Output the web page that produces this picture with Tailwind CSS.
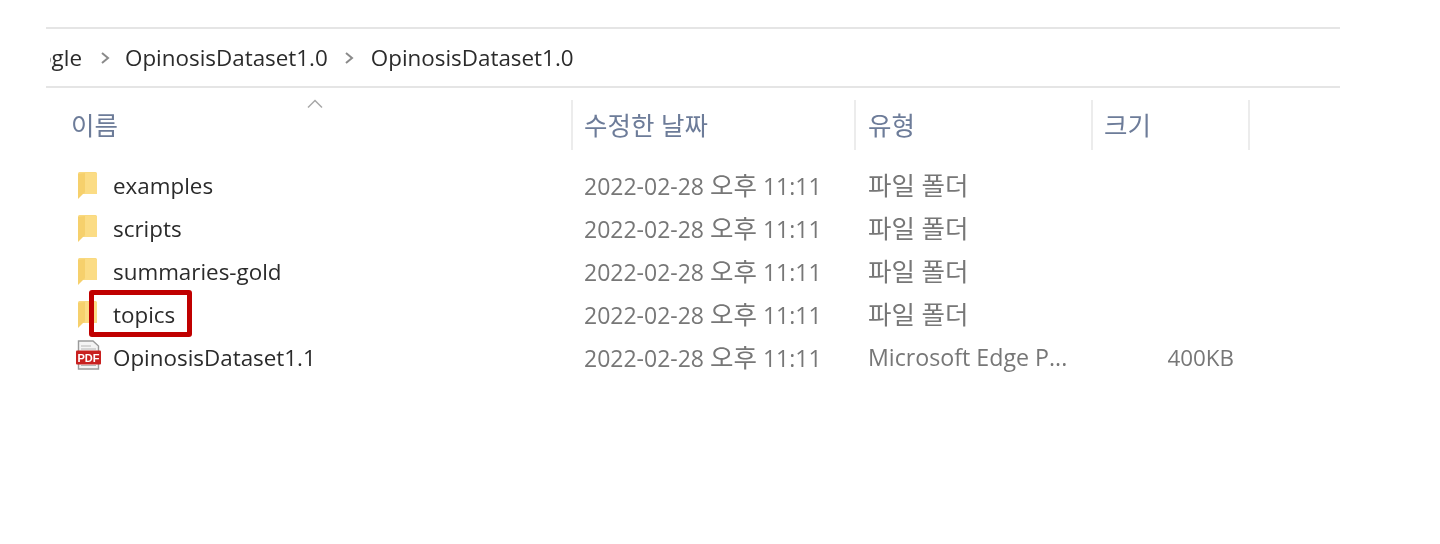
<!doctype html>
<html lang="ko">
<head>
<meta charset="utf-8">
<script src="https://cdn.jsdelivr.net/npm/@tailwindcss/browser@4"></script>
</head>
<body class="bg-white">
<div class="relative w-[1440px] h-[544px] overflow-hidden">
<div class="blur-[0.35px] h-full pt-[27px] pl-[46px] font-['Open_Sans','Noto_Sans_CJK_KR',sans-serif] text-[22.4px]">
  <svg width="0" height="0" class="absolute">
    <defs>
      <symbol id="folder" viewBox="0 0 19 27">
        <path d="M0 1.5 Q0 0 1.5 0 H17.5 Q19 0 19 1.5 V22 H4 L0 26 Z" fill="#f9d97f"/>
        <path d="M0 2 L7 1 V20 L0 27 Z" fill="#f6d06c"/>
        <path d="M7 1 H19 V22 H7 Z" fill="#fbdc85"/>
      </symbol>
    </defs>
  </svg>

  <div class="w-[1294px] h-[61px] border-y-2 border-[#e5e5e5] flex items-center text-[#2b2b2b] overflow-hidden">
    <span class="ml-[4px] w-[32px] overflow-hidden flex justify-end"><span class="whitespace-nowrap">Google</span></span>
    <svg class="ml-[18px] w-[10px] h-[14px]" viewBox="0 0 10 14" fill="none" stroke="#8a8a8a" stroke-width="2"><path d="M2 2 L8 7 L2 12"/></svg>
    <span class="ml-[15px] whitespace-nowrap">OpinosisDataset1.0</span>
    <svg class="ml-[16px] w-[10px] h-[14px]" viewBox="0 0 10 14" fill="none" stroke="#8a8a8a" stroke-width="2"><path d="M2 2 L8 7 L2 12"/></svg>
    <span class="ml-[17px] whitespace-nowrap">OpinosisDataset1.0</span>
  </div>

  <div class="relative w-[1294px] h-[62px] flex text-[#6d7c99] text-[25.5px] -mt-px">
    <svg class="absolute left-[261px] top-[12px] w-[16px] h-[10px]" viewBox="0 0 16 10" fill="none" stroke="#a8a8a8" stroke-width="1.5"><path d="M1 8.5 L8 1.5 L15 8.5"/></svg>
    <div class="w-[527px] pl-[25px] flex items-center border-r-2 border-[#ececec] mt-[13px] h-[50px]">이름</div>
    <div class="w-[283px] pl-[11px] flex items-center border-r-2 border-[#ececec] mt-[13px] h-[50px]">수정한 날짜</div>
    <div class="w-[237px] pl-[12px] flex items-center border-r-2 border-[#ececec] mt-[13px] h-[50px]">유형</div>
    <div class="w-[157px] pl-[11px] flex items-center border-r-2 border-[#ececec] mt-[13px] h-[50px]">크기</div>
  </div>

  <div class="mt-[15px] text-[#2b2b2b]">
    <div class="flex items-center h-[43px]">
      <svg class="ml-[32px] w-[19px] h-[27px]"><use href="#folder"/></svg>
      <span class="ml-[16px] w-[471px]">examples</span>
      <span class="w-[284px] text-[#777] text-[23px]">2022-02-28 <span class="text-[25.5px]">오후</span> 11:11</span>
      <span class="text-[#777] text-[25.5px]">파일 폴더</span>
    </div>
    <div class="flex items-center h-[43px]">
      <svg class="ml-[32px] w-[19px] h-[27px]"><use href="#folder"/></svg>
      <span class="ml-[16px] w-[471px]">scripts</span>
      <span class="w-[284px] text-[#777] text-[23px]">2022-02-28 <span class="text-[25.5px]">오후</span> 11:11</span>
      <span class="text-[#777] text-[25.5px]">파일 폴더</span>
    </div>
    <div class="flex items-center h-[43px]">
      <svg class="ml-[32px] w-[19px] h-[27px]"><use href="#folder"/></svg>
      <span class="ml-[16px] w-[471px]">summaries-gold</span>
      <span class="w-[284px] text-[#777] text-[23px]">2022-02-28 <span class="text-[25.5px]">오후</span> 11:11</span>
      <span class="text-[#777] text-[25.5px]">파일 폴더</span>
    </div>
    <div class="flex items-center h-[43px]">
      <svg class="ml-[32px] w-[19px] h-[27px]"><use href="#folder"/></svg>
      <span class="ml-[16px] w-[471px]">topics</span>
      <span class="w-[284px] text-[#777] text-[23px]">2022-02-28 <span class="text-[25.5px]">오후</span> 11:11</span>
      <span class="text-[#777] text-[25.5px]">파일 폴더</span>
    </div>
    <div class="flex items-center h-[43px]">
      <svg class="ml-[29px] w-[27px] h-[30px] -mt-[5px]" viewBox="0 0 27 30">
        <path d="M3.5 1 H18 L23.5 6 V29 H3.5 Z" fill="#f4f4f4" stroke="#9a9a9a" stroke-width="1.4"/>
        <path d="M6 6 H16 M6 9 H21 M6 25.5 H21" stroke="#b5b5b5" stroke-width="1.2"/>
        <rect x="1" y="10.5" width="25" height="14" rx="1" fill="#c8201f"/>
        <text x="13.5" y="21.5" text-anchor="middle" font-family="Liberation Sans" font-weight="700" font-size="11" fill="#fff">PDF</text>
      </svg>
      <span class="ml-[11px] w-[471px]">OpinosisDataset1.1</span>
      <span class="w-[284px] text-[#777] text-[23px]">2022-02-28 <span class="text-[25.5px]">오후</span> 11:11</span>
      <span class="w-[237px] text-[#777] text-[23.2px]">Microsoft Edge P...</span>
      <span class="w-[129px] text-right text-[#777]">400KB</span>
    </div>
  </div>

  <div class="absolute left-[89px] top-[290px] w-[103px] h-[47px] border-[5px] border-[#c00000] rounded-[3px]"></div>
</div>
</div>
</body>
</html>
